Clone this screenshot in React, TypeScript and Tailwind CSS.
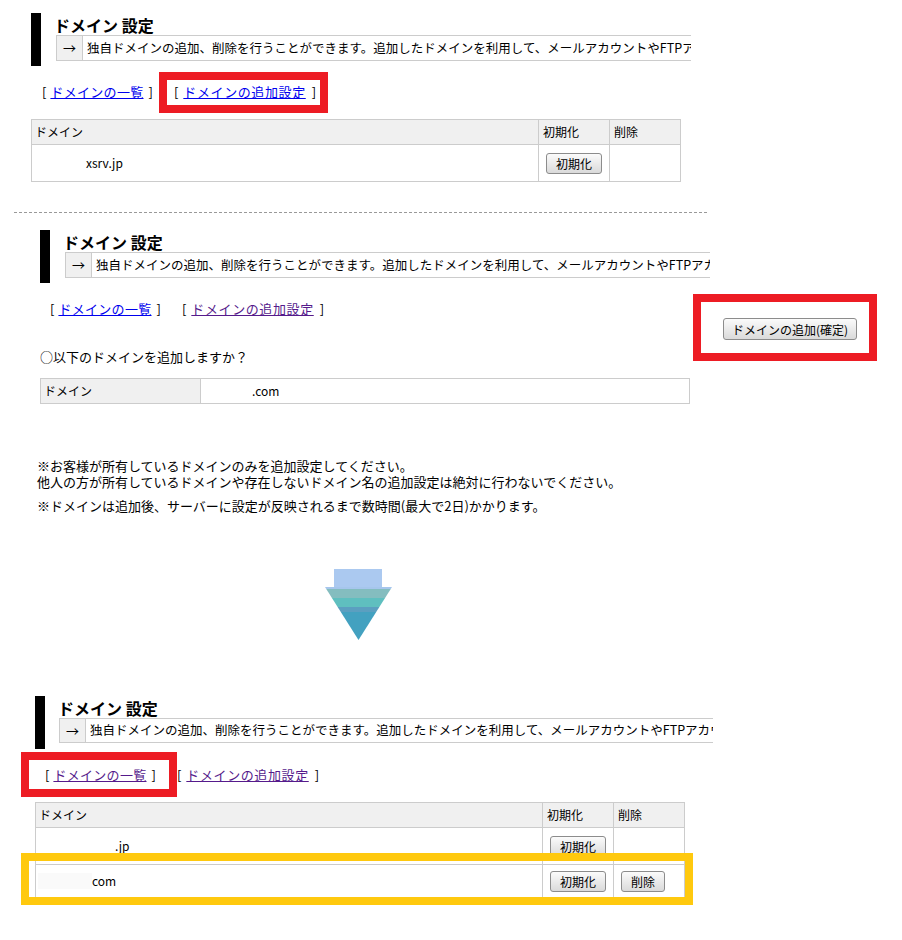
import React from "react";

const DESC =
  "独自ドメインの追加、削除を行うことができます。追加したドメインを利用して、メールアカウントやFTPアカウントの追加を行います。";

function Btn({ children, className = "" }: { children: React.ReactNode; className?: string }) {
  return (
    <button
      className={`h-[21px] rounded-[3px] border border-[#8c8c8c] bg-linear-to-b from-[#fbfbfb] to-[#dadada] text-[12px] leading-[19px] text-black whitespace-nowrap ${className}`}
    >
      {children}
    </button>
  );
}

function Header({ boxClass }: { boxClass: string }) {
  return (
    <div className="flex">
      <div className="w-[10px] h-[53px] bg-black shrink-0" />
      <div className="ml-[13px]">
        <div className="h-[22px] pt-[4px] text-[16px] leading-[16px] font-bold whitespace-nowrap">ドメイン 設定</div>
        <div className={`flex overflow-hidden border-y border-l border-[#cccccc] ${boxClass}`}>
          <div className="w-[26px] shrink-0 bg-[#f0f0f0] border-r border-[#cccccc] flex items-center justify-center text-[13px]">
            →
          </div>
          <div className="pl-[4px] flex items-center whitespace-nowrap text-[12.5px]">{DESC}</div>
        </div>
      </div>
    </div>
  );
}

function Links({
  firstVisited = false,
  secondVisited = false,
  className = "",
}: {
  firstVisited?: boolean;
  secondVisited?: boolean;
  className?: string;
}) {
  const blue = "text-[#0000ee]";
  const purple = "text-[#551a8b]";
  return (
    <div className={`flex text-[13px] leading-[18px] whitespace-nowrap ${className}`}>
      <span>[</span>
      <a href="#" className={`ml-[4px] underline tracking-[0.3px] ${firstVisited ? purple : blue}`}>
        ドメインの一覧
      </a>
      <span className="ml-[5px]">]</span>
      <span className="ml-[21px]">[</span>
      <a href="#" className={`ml-[5px] underline tracking-[0.6px] ${secondVisited ? purple : blue}`}>
        ドメインの追加設定
      </a>
      <span className="ml-[6px]">]</span>
    </div>
  );
}

function HeadRow() {
  return (
    <div className="grid grid-cols-[507px_71px_71px] h-[25px] bg-[#f0f0f0] text-[12px]">
      <div className="border-r border-b border-[#cccccc] pl-[3px] flex items-center">ドメイン</div>
      <div className="border-r border-b border-[#cccccc] pl-[4px] flex items-center">初期化</div>
      <div className="border-r border-b border-[#cccccc] pl-[4px] flex items-center">削除</div>
    </div>
  );
}

function Arrow() {
  return (
    <svg width="67" height="71" viewBox="0 0 67 71">
      <defs>
        <clipPath id="tri">
          <polygon points="0,18 67,18 33.5,71" />
        </clipPath>
      </defs>
      <rect x="9" y="0" width="48" height="18" fill="#abc9f0" />
      <g clipPath="url(#tri)">
        <rect x="0" y="18" width="67" height="2" fill="#a6c6ec" />
        <rect x="0" y="20" width="67" height="9" fill="#84bdbf" />
        <rect x="0" y="29" width="67" height="9" fill="#5fbfbf" />
        <rect x="0" y="38" width="67" height="5" fill="#5b9fc0" />
        <rect x="0" y="43" width="67" height="28" fill="#43a1c0" />
      </g>
    </svg>
  );
}

export default function App() {
  return (
    <div className="relative w-[902px] h-[940px] bg-white text-black overflow-hidden font-['Noto_Sans_CJK_JP','Noto_Sans',sans-serif]">
      {/* step 1 */}
      <section className="pt-[13px] pl-[31px]">
        <Header boxClass="w-[635px] h-[26px] ml-[2px]" />
        <Links className="mt-[17px] ml-[11px]" />
        <div className="mt-[18px] w-[650px] border-t border-l border-[#cccccc]">
          <HeadRow />
          <div className="grid grid-cols-[507px_71px_71px] h-[37px] text-[12px]">
            <div className="border-r border-b border-[#cccccc] pl-[54px] flex items-center">xsrv.jp</div>
            <div className="border-r border-b border-[#cccccc] pl-[7px] flex items-center">
              <Btn className="px-[9px]">初期化</Btn>
            </div>
            <div className="border-r border-b border-[#cccccc]" />
          </div>
        </div>
      </section>

      <div className="mt-[30px] ml-[14px] w-[693px] border-t border-dashed border-[#999999]" />

      {/* step 2 */}
      <section className="mt-[17px] pl-[40px]">
        <Header boxClass="w-[645px] h-[26px] ml-[2px]" />
        <div className="flex items-start w-[817px] mt-[17px]">
          <Links className="ml-[10px]" secondVisited />
          <Btn className="ml-auto mt-[18px] h-[22px] px-[8px]">ドメインの追加(確定)</Btn>
        </div>
        <p className="mt-[8px] text-[13px] leading-[18px]">○以下のドメインを追加しますか？</p>
        <div className="mt-[12px] w-[650px] border-t border-l border-[#cccccc] flex h-[26px] text-[12px]">
          <div className="w-[160px] bg-[#f0f0f0] border-r border-b border-[#cccccc] pl-[3px] flex items-center">ドメイン</div>
          <div className="flex-1 border-r border-b border-[#cccccc] pl-[51px] flex items-center">.com</div>
        </div>
        <div className="mt-[54px] -ml-[3px] text-[13px] leading-[16px] whitespace-nowrap">
          <p className="h-[16px]">※お客様が所有しているドメインのみを追加設定してください。</p>
          <p className="h-[16px]">他人の方が所有しているドメインや存在しないドメイン名の追加設定は絶対に行わないでください。</p>
          <p className="mt-[8px] h-[16px]">※ドメインは追加後、サーバーに設定が反映されるまで数時間(最大で2日)かかります。</p>
        </div>
      </section>

      <div className="mt-[55px] ml-[325px] w-[67px] h-[71px]">
        <Arrow />
      </div>

      {/* step 3 */}
      <section className="mt-[56px] pl-[35px]">
        <Header boxClass="w-[654px] h-[25px] ml-[1px]" />
        <Links className="mt-[17px] ml-[10px]" firstVisited secondVisited />
        <div className="mt-[18px] w-[650px] border-t border-l border-[#cccccc]">
          <HeadRow />
          <div className="grid grid-cols-[507px_71px_71px] h-[37px] text-[12px]">
            <div className="border-r border-b border-[#cccccc] pl-[79px] flex items-center">.jp</div>
            <div className="border-r border-b border-[#cccccc] pl-[7px] flex items-center">
              <Btn className="px-[9px]">初期化</Btn>
            </div>
            <div className="border-r border-b border-[#cccccc]" />
          </div>
          <div className="grid grid-cols-[507px_71px_71px] h-[33px] text-[12px]">
            <div className="border-r border-b border-[#cccccc] pl-[2px] flex items-center">
              <span className="inline-block w-[54px] h-[16px] bg-[#fafafa]" />
              <span>com</span>
            </div>
            <div className="border-r border-b border-[#cccccc] pl-[7px] flex items-center">
              <Btn className="px-[9px]">初期化</Btn>
            </div>
            <div className="border-r border-b border-[#cccccc] pl-[7px] flex items-center">
              <Btn className="px-[9px]">削除</Btn>
            </div>
          </div>
        </div>
      </section>

      {/* highlight overlays */}
      <div className="absolute left-[159px] top-[72px] w-[169px] h-[41px] border-8 border-[#ed1c24]" />
      <div className="absolute left-[693px] top-[294px] w-[184px] h-[67px] border-8 border-[#ed1c24]" />
      <div className="absolute left-[21px] top-[752px] w-[156px] h-[45px] border-8 border-[#ed1c24]" />
      <div className="absolute left-[21px] top-[853px] w-[672px] h-[52px] border-8 border-[#ffc90e]" />
    </div>
  );
}
